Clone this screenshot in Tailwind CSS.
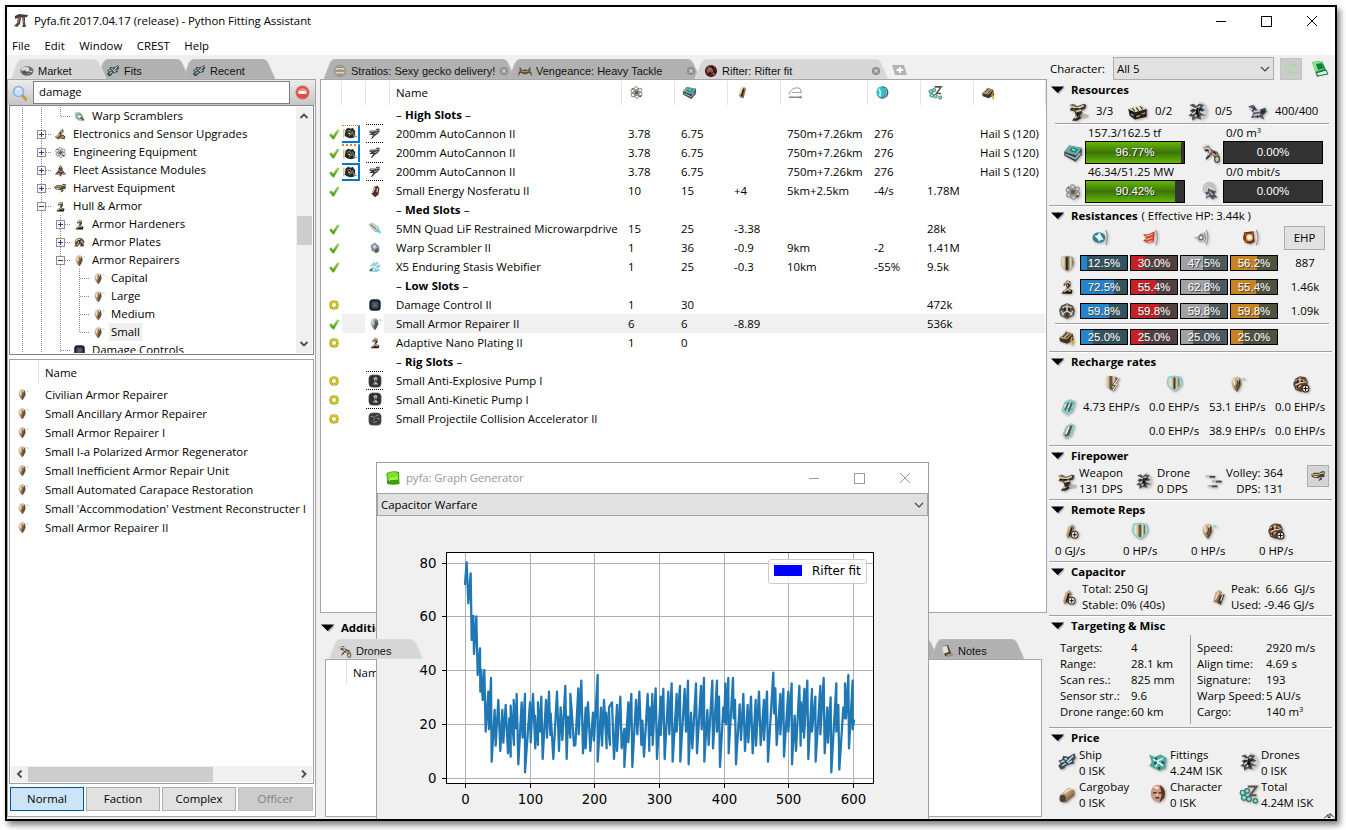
<!DOCTYPE html>
<html lang="en">
<head>
<meta charset="utf-8">
<title>Pyfa.fit 2017.04.17 (release) - Python Fitting Assistant</title>
<script src="https://cdn.jsdelivr.net/npm/@tailwindcss/browser@4"></script>
</head>
<body class="bg-white w-[1346px] h-[830px] overflow-hidden font-['Open_Sans','Noto_Sans',sans-serif] text-[11.4px] leading-4 text-black">
<svg class="absolute h-0 w-0">
  <defs>
    <linearGradient id="gTan" x1="0" y1="0" x2="1" y2="1"><stop offset="0" stop-color="#f4e6cd"/><stop offset=".5" stop-color="#b2916a"/><stop offset="1" stop-color="#3a2a1c"/></linearGradient>
    <linearGradient id="gDark" x1="0" y1="0" x2="1" y2="1"><stop offset="0" stop-color="#8d7d66"/><stop offset=".5" stop-color="#3f362b"/><stop offset="1" stop-color="#14100c"/></linearGradient>
    <linearGradient id="gTeal" x1="0" y1="0" x2="1" y2="1"><stop offset="0" stop-color="#b9f3ec"/><stop offset=".5" stop-color="#35a79c"/><stop offset="1" stop-color="#16403e"/></linearGradient>
    <linearGradient id="gGray" x1="0" y1="0" x2="1" y2="1"><stop offset="0" stop-color="#e4e4e2"/><stop offset=".5" stop-color="#8b8d8f"/><stop offset="1" stop-color="#2b2d30"/></linearGradient>
    <linearGradient id="gGreen" x1="0" y1="0" x2="0" y2="1"><stop offset="0" stop-color="#8bd24c"/><stop offset="1" stop-color="#3f8f12"/></linearGradient>
    <linearGradient id="gShield" x1="0" x2="1"><stop offset="0" stop-color="#f7f1e2"/><stop offset=".3" stop-color="#c9b48d"/><stop offset=".5" stop-color="#4a3723"/><stop offset=".75" stop-color="#e6dcc6"/><stop offset="1" stop-color="#4c3d2c"/></linearGradient>
  </defs>
  <symbol id="rep" viewBox="0 0 16 16"><path d="M4 3Q8 0 11 3L12 8Q10 13 8 15Q3 11 3 6Z" fill="url(#gTan)"/><path d="M8 4L9 7L7 11M10.500 4L10 9L8 13" stroke="#3a291a" fill="none" stroke-width=".9"/><path d="M5 4L6 9M8.500 3L9 5" stroke="#fff3dc"/><path d="M12 4Q15 2 15 5" stroke="#8fd3d0" fill="none"/></symbol>
  <symbol id="repg" viewBox="0 0 16 16"><path d="M4 3Q8 0 11 3L12 8Q10 13 8 15Q3 11 3 6Z" fill="url(#gGray)"/><path d="M8 4L9 7L7 11M10.500 4L10 9L8 13" stroke="#33464e" fill="none" stroke-width=".9"/><path d="M5 4L6 9" stroke="#eef8fa"/><path d="M12 4Q15 2 15 5" stroke="#6fc6c4" fill="none"/></symbol>
  <symbol id="plate" viewBox="0 0 16 16"><path d="M5 5L8 2L11 3V7L9 9L13 11L12 14H3L5 11L8 9L7 6L5 7Z" fill="url(#gDark)"/><path d="M6 5L9 3L10 5L8 7M5 12L9 10L11 12" stroke="#d6bb98" fill="none" stroke-width="1.3"/><path d="M9 5L10 7M7 13H12" stroke="#130e0a"/></symbol>
  <symbol id="plates" viewBox="0 0 16 16"><path d="M2 7Q3 3 8 2Q14 3 14 8L13 13H9V9L6 13H2L3 10Z" fill="#5c4a38"/><path d="M3 7Q6 3 9 4M5 11L7 7M10 6L13 10" stroke="#eadbbe" fill="none" stroke-width="1.4"/><path d="M8 5V9M4 9H6M11 8V12" stroke="#1c1510"/></symbol>
  <symbol id="gun" viewBox="0 0 16 16"><ellipse cx="11" cy="11.500" rx="5" ry="2" fill="#000" opacity=".2"/><path d="M1 3L4 2L7 4L12 2L14 3L13 6L10 7L11 9L9 11L10 13L7 15H3L6 11L5 8L1 7L3 5Z" fill="url(#gDark)"/><path d="M2 4L7 5.500L12 3.500M6 8L10 7M5 13L8 11" stroke="#dccaa8" stroke-width="1.300" fill="none"/><path d="M5 6H8M8 9L7 12M2 6H4" stroke="#120d08"/></symbol>
  <symbol id="gun2" viewBox="0 0 16 16"><path d="M1 6L3 4L8 4L10 2L14 2L12 4L14 4L11 8L8 10L5 13L3 14L6 9H1L4 7Z" fill="#3d3a37"/><path d="M3 5.500L12 3.500M7 8L11 6" stroke="#bcb3a6" stroke-width="1.100"/></symbol>
  <symbol id="ammo" viewBox="0 0 16 16"><path d="M3 4L6 2L9 3L11 2L14 6L13 13L9 14L5 13L2 11Z" fill="#272a22"/><path d="M5 6L8 5L10 9L7 11M11 6L12 11" stroke="#a39a80" fill="none"/><path d="M6 8L8 9" stroke="#e1d8b8" stroke-width="1.500"/><path d="M1 3V13" stroke="#a8b05b" stroke-width="1.200"/><path d="M12 12H16M13 10H15" stroke="#8b8678"/></symbol>
  <symbol id="launcher" viewBox="0 0 16 16"><path d="M1 6L10 4L15 6V12L6 14L2 11Z" fill="#211d17"/><path d="M1 6L9 3.500L15 6L6 8.500Z" fill="#e7ddc3"/><path d="M3 10L5 11M7 12L10 11M11 10L14 9" stroke="#9e8b63" stroke-width="1.200"/><path d="M4 5.500L6 8M7 5L9 7.500M10 4L12 6.500" stroke="#333" stroke-width=".9"/></symbol>
  <symbol id="drone" viewBox="0 0 16 16"><path d="M9 1A7 7 0 0 1 15 9Q14 13 11 14" stroke="#bbb" stroke-width=".8" fill="none"/><path d="M2 3L5 2L7 4L9 2L13 3L11 5L14 7L11 8L14 11L10 11L11 14L7 13L4 15L4 12L1 11L4 9L2 7L5 6Z" fill="#4b4d50"/><path d="M3 4L6 6L10 4M7 8L4 10M10 8L13 10M6 12L8 10" stroke="#dcdedf" fill="none"/><path d="M8 5L7 9L9 12M4 7H6M11 6L9 7" stroke="#131416"/></symbol>
  <symbol id="calib" viewBox="0 0 16 16"><path d="M1 4L5 3L8 7L14 5L15 8L12 11L13 14L9 12L3 13L5 9Z" fill="#52565f"/><path d="M2 5L6 8L13 7M5 11L10 10" stroke="#c4c9d2" fill="none" stroke-width="1.300"/><circle cx="12" cy="8" r="1.800" fill="#23293a"/><path d="M6 5L4 8M8 11V13" stroke="#252830"/></symbol>
  <symbol id="cpu" viewBox="0 0 16 16"><path d="M1 7L5 2L15 4V9L10 15L1 10Z" fill="#31494b"/><path d="M1 7L5 2L15 4L11 10Z" fill="#74a9a4"/><path d="M5 6L7 3.600L12 4.700L10 8Z" fill="#0f7b72"/><path d="M7 5L10 6" stroke="#6cf3dc" stroke-width="1.400"/><path d="M2 9L10 12.500L14 8" stroke="#b7c9c7" fill="none"/></symbol>
  <symbol id="pg" viewBox="0 0 16 16"><g fill="none" stroke="#8d8780" stroke-width="1"><ellipse cx="8" cy="8" rx="6.500" ry="2.600" transform="rotate(25 8 8)"/><ellipse cx="8" cy="8" rx="6.500" ry="2.600" transform="rotate(85 8 8)"/><ellipse cx="8" cy="8" rx="6.500" ry="2.600" transform="rotate(-35 8 8)"/></g><circle cx="8" cy="8" r="2" fill="#5f5852"/><circle cx="4" cy="4" r="1" fill="#6d655c"/><circle cx="12" cy="12" r="1.100" fill="#4d463f"/></symbol>
  <symbol id="cap" viewBox="0 0 16 16"><path d="M6 3L10 2L12 4L9 14L5 13L4 11Z" fill="url(#gTan)"/><path d="M9.500 4L7 12" stroke="#20160e" stroke-width="1.500"/><path d="M7 3L5 10" stroke="#fff0d5"/></symbol>
  <symbol id="capplus" viewBox="0 0 16 16"><path d="M5 3L9 1L11 4L8 13L4 14L3 11Z" fill="url(#gTan)"/><path d="M8.500 4L6 12" stroke="#20160e" stroke-width="1.500"/><circle cx="11" cy="11" r="3.200" fill="#eee" stroke="#3c2c1d"/><path d="M9 11H13M11 9V13" stroke="#111"/></symbol>
  <symbol id="nos" viewBox="0 0 16 16"><path d="M7 3L11 2L13 5L12 12L8 15L4 11Z" fill="#4b332b"/><path d="M8 4L5 10M11 5L10 10" stroke="#f3ddd0" stroke-width="1.300"/><path d="M10 9L9 13" stroke="#8c1f18" stroke-width="1.500"/></symbol>
  <symbol id="range" viewBox="0 0 16 16"><path d="M1 10Q3 3 10 3Q14 3 14 8" fill="none" stroke="#8f9394"/><path d="M4 8H15" stroke="#9fa3a3"/><path d="M1 13H15" stroke="#5e6262" stroke-width="1.200"/><path d="M13 11.500V14.500" stroke="#777"/></symbol>
  <symbol id="track" viewBox="0 0 16 16"><ellipse cx="8" cy="8" rx="6.300" ry="6.600" fill="#35656d"/><ellipse cx="6.600" cy="7.600" rx="4.800" ry="5.800" fill="#35c2cf"/><path d="M4 4Q7 8 5 12" stroke="#c5ffff" stroke-width="1.800" fill="none"/><path d="M11 3Q14 8 10 14" stroke="#c9c5ba" fill="none"/></symbol>
  <symbol id="isk" viewBox="0 0 16 16"><path d="M7 2H14L9 9H14" fill="none" stroke="#595443" stroke-width="1.700"/><g fill="#8fe0cf" stroke="#2b7468" stroke-width=".9"><circle cx="3" cy="7" r="2"/><circle cx="6.500" cy="5.500" r="1.800"/><circle cx="4" cy="11" r="2"/><circle cx="8" cy="12" r="1.900"/><circle cx="13" cy="13.400" r="1.700"/></g></symbol>
  <symbol id="crate" viewBox="0 0 16 16"><path d="M1 9L7 3L13 5L14 11L8 14L2 12Z" fill="#3f3527"/><path d="M1 9L7 3L13 5L8 10Z" fill="#b39f79"/><path d="M4 8L8 4M7 9L11 5" stroke="#4b3f2e"/><path d="M3 7L6 4" stroke="#f2e6c8"/><path d="M12.500 8L11.500 11.500H13.500L12.500 15.500" stroke="#d59d20" stroke-width="1.300" fill="none"/></symbol>
  <symbol id="mwd" viewBox="0 0 16 16"><path d="M1 3L5 1L12 6L13 11L8 11Z" fill="#ccd5d3" stroke="#8b918d" stroke-width=".6"/><path d="M3 3L9 8" stroke="#8a7556" stroke-width="1.200"/><path d="M9 8Q14 7 15 13L9 11Z" fill="#5ed6d4"/></symbol>
  <symbol id="scram" viewBox="0 0 16 16"><path d="M3 5L8 2L13 6V12L9 14L4 11Z" fill="#969eaa"/><path d="M7 10L12 8V12L9 14Z" fill="#6f5840"/><circle cx="7.500" cy="6.500" r="3" fill="#bcd0ea" stroke="#56698a"/></symbol>
  <symbol id="scramt" viewBox="0 0 16 16"><path d="M2 3L8 2L12 6L14 12L9 14L3 10Z" fill="#9fcfc4"/><circle cx="7.500" cy="8" r="3" fill="#ece1ca" stroke="#52645d"/><path d="M10 9L13 13" stroke="#5a4b32" stroke-width="2"/></symbol>
  <symbol id="web" viewBox="0 0 16 16"><path d="M2 6L6 4L5 1L8 4L12 1L11 5L15 6L12 9L14 12L9 14L3 13L2 10L5 9Z" fill="#8fcfd3"/><path d="M4 7L8 8L11 5M8 8L6 12M9 9L13 11" stroke="#e6fbfc" fill="none" stroke-width="1.200"/><path d="M2 12.500L5 10.500" stroke="#384d52" stroke-width="1.600"/></symbol>
  <symbol id="dc" viewBox="0 0 16 16"><rect x="1.500" y="1.500" width="13" height="13" rx="4" fill="#17222c"/><rect x="4" y="4" width="8" height="8" rx="2" fill="#34506c"/><rect x="6" y="6" width="4" height="4" fill="#7d5353"/></symbol>
  <symbol id="rig" viewBox="0 0 16 16"><rect x="1" y="1" width="14" height="14" rx="4" fill="#2f3032" stroke="#6a6a6a" stroke-width=".7"/><path d="M6 5L9 3L11 5L9 9L12 12H5L8 8Z" fill="#d8c4a7"/><path d="M9 5V8L6 12" stroke="#3d2d20" fill="none"/></symbol>
  <symbol id="rig2" viewBox="0 0 16 16"><rect x="1" y="1" width="14" height="14" rx="4" fill="#3a3a3b" stroke="#6a6a6a" stroke-width=".7"/><path d="M3 5L7 6L12 3M5 10L8 7L13 8M6 12L10 11" stroke="#a29a90" stroke-width="1.100" fill="none"/><path d="M8 5L10 9M4 8H6" stroke="#111"/></symbol>
  <symbol id="sensor" viewBox="0 0 16 16"><path d="M1 11L5 8L8 3L11 1L12 5L9 8L14 10L13 14L9 12L5 14Z" fill="#6f5744"/><path d="M9 3L10 6M3 11L7 8" stroke="#d9b893" stroke-width="1.500"/><circle cx="10.500" cy="11" r="2.200" fill="#c49a6c" stroke="#40301f"/></symbol>
  <symbol id="fleet" viewBox="0 0 16 16"><path d="M8 1L11 6L10 7L15 13H9V15H7V13H1L6 7L5 6Z" fill="#4d4340"/><path d="M8 2V5M6 9H10M4 12H7M10 12H13" stroke="#c99e93" stroke-width="1.200"/><circle cx="8" cy="7" r="1" fill="#a7342f"/></symbol>
  <symbol id="harvest" viewBox="0 0 16 16"><path d="M0 6L3 4L9 4L12 2L15 3L14 6L15 8L11 9L12 11L8 13L9 10L2 9Z" fill="#45433a"/><path d="M1 6L9 6" stroke="#dfa93b" stroke-width="1.500"/><path d="M9 5L14 4M8 11L10 9M3 8H7" stroke="#d5d3c8" stroke-width="1.100"/></symbol>
  <symbol id="market" viewBox="0 0 16 16"><ellipse cx="8" cy="8" rx="7.500" ry="5.500" fill="#6b6e6f"/><ellipse cx="6" cy="6" rx="4.400" ry="2.800" fill="#cfd8d6"/><circle cx="5" cy="9" r="1.800" fill="#7c3d32"/><path d="M9 11L14 8M8 5L11 9" stroke="#e3e5e5" stroke-width="1.200"/><path d="M7 12L10 9L13 11" stroke="#2b2d2e" fill="none"/></symbol>
  <symbol id="ship" viewBox="0 0 16 16"><path d="M1 7L4 6L5 3L9 4L14 1L15 5L13 7L14 9L10 10L7 11L6 13L3 14L1 11L3 9Z" fill="#3b4b54"/><path d="M3 8L6 7M8 8L13 3M4 11L7 9M9 9L12 7M6 5L8 6" stroke="#c9dce4" stroke-width="1.200" fill="none"/></symbol>
  <symbol id="fitt" viewBox="0 0 16 16"><path d="M1 2L5 4L10 2L15 5L14 13L9 15L5 13L1 11L3 8Z" fill="#4fa49c"/><path d="M4 6L8 7L12 5M6 12L8 8L12 11" stroke="#d3f7f1" stroke-width="1.300" fill="none"/><path d="M5 9H7M11 8L13 9M9 12V14M6 5L7 6" stroke="#164845" stroke-width="1.500"/></symbol>
  <symbol id="char" viewBox="0 0 16 16"><ellipse cx="8" cy="7.500" rx="5.800" ry="6.800" fill="#c99a82"/><path d="M9.500 1Q15 4 13 11L9 15L11 9Z" fill="#553224"/><path d="M4 7H7M8.500 7H11M6 11H9" stroke="#3a1f15"/><path d="M5 3Q7 2 8 4M7 8V9" stroke="#f9e4d8" stroke-width="1.600" fill="none"/></symbol>
  <symbol id="cargo" viewBox="0 0 16 16"><path d="M2 9L9 3L14 5V9L7 15L3 13Z" fill="url(#gTan)"/><ellipse cx="4.600" cy="11.600" rx="2.600" ry="3" fill="#54422f"/><path d="M6 7L11 4" stroke="#fff3dd"/></symbol>
  <symbol id="dbay" viewBox="0 0 16 16"><path d="M1 4L6 2L8 5L13 7L15 11L11 12L9 9L4 12L6 7Z" fill="#6b6762"/><path d="M2 4L6 4L8 8L13 10M5 10L8 7M1 2L5 1" stroke="#e6e1d7" fill="none"/><path d="M3 6L6 6M10 7L12 9M4 13L7 10" stroke="#22201e" fill="none"/><circle cx="8" cy="8.500" r="1.200" fill="#c52b23"/><ellipse cx="12.800" cy="13" rx="1.900" ry="2.500" fill="#cfc4a3" stroke="#564b34"/></symbol>
  <symbol id="bw" viewBox="0 0 16 16"><g fill="none" stroke="#b4b9bc"><circle cx="7" cy="5.500" r="5"/><circle cx="7" cy="5.500" r="2.800"/></g><path d="M6 5L9 7L13 8L11 10L14 13L11 13L10 15L7 12L4 14L5 10L3 9L6 8Z" fill="#474e57"/><path d="M7 8L10 11M5 12L7 10" stroke="#c5ccd4"/></symbol>
  <symbol id="em" viewBox="0 0 16 16"><ellipse cx="6.500" cy="8" rx="6" ry="5" fill="#357f93"/><path d="M2 6L5 6L7 3L9 7L11 10L8 10L7 12L5 9Z" fill="#e9fbff"/><path d="M13 1Q16 8 13 15" stroke="#8d8d8d" fill="none"/></symbol>
  <symbol id="th" viewBox="0 0 16 16"><path d="M1 5L6 5L12 2L11 12L5 13L1 11L4 9Z" fill="#d1402b"/><path d="M3 7L10 5M4 10L10 8M5 12L10 11" stroke="#ffb69b"/><path d="M13 1Q16 8 13 15" stroke="#8d8d8d" fill="none"/></symbol>
  <symbol id="ki" viewBox="0 0 16 16"><path d="M1 8L6 7L8 4L11 4L10 11L7 12L5 9Z" fill="#a9adac"/><circle cx="8.500" cy="8" r="2" fill="#f5f5f5" stroke="#666"/><path d="M11.500 3Q14 8 11.500 13M13.500 1Q16.500 8 13.500 15" stroke="#949494" fill="none"/></symbol>
  <symbol id="ex" viewBox="0 0 16 16"><path d="M2 3L11 2L12 12L8 14L3 13L1 9Z" fill="#71381a"/><circle cx="7" cy="8" r="3.200" fill="#ffc37b"/><circle cx="7" cy="8" r="1.800" fill="#fff8e6"/><path d="M3 4L4 6M11 4L9 5M3 12L5 11" stroke="#e67a22"/><path d="M13.500 1Q16.500 8 13.500 15" stroke="#8d8d8d" fill="none"/></symbol>
  <symbol id="shield" viewBox="0 0 16 16"><path d="M5 4Q9 0 13 4" stroke="#b7b7b7" fill="none"/><path d="M3 3Q8 1 13 3L14 8Q13 13 8 15Q3 13 3 8Z" fill="url(#gShield)" stroke="#a49c8d" stroke-width=".5"/><path d="M7.500 3V14" stroke="#28211a" stroke-width="1.200"/></symbol>
  <symbol id="shieldt" viewBox="0 0 16 16"><path d="M2 2Q8 0 14 2L15 8Q13 13 8 15Q3 13 1 8Z" fill="#9fdcd8" stroke="#72b9b5" stroke-width=".6"/><path d="M3.500 3Q8 1.500 12.500 3V10Q11 12.500 8 13.500Q5 12.500 3.500 10Z" fill="url(#gShield)"/></symbol>
  <symbol id="shieldb" viewBox="0 0 16 16"><path d="M1 2Q6 0 12 2V9Q10 13 7 14Q2 12 1 7Z" fill="url(#gShield)"/><path d="M14 3L9 9H12L8 15" fill="none" stroke="#4b3c2c" stroke-width="2"/><path d="M14 3L9.500 8.600H12.500L8 15" fill="none" stroke="#f4efe0"/></symbol>
  <symbol id="hull" viewBox="0 0 16 16"><path d="M8 1L13 3L15 7L14 12L8 15L2 12L1 7L3 3Z" fill="#5a534b"/><path d="M8 2V8L3 11M8 8L13 11M4 5Q8 3 12 5M3 8L5 12M13 8L11 12" stroke="#e9e2d4" stroke-width="1" fill="none"/><path d="M6 5V8M10 5V8M8 10V13" stroke="#1c1814"/></symbol>
  <symbol id="hullp" viewBox="0 0 16 16"><path d="M7 1L12 2L14 6L13 12L8 15L3 13L1 8L3 3Z" fill="#60432c"/><path d="M7 2V7L3 9M7 7L13 6M3 5Q7 3 11 5M4 12L8 9" stroke="#e2c9ab" stroke-width="1" fill="none"/><path d="M5 4V7M9 4V6M5 10V12" stroke="#22160d"/><circle cx="12" cy="12" r="3" fill="#eee" stroke="#32241a"/><path d="M10 12H14M12 10V14" stroke="#111"/></symbol>
  <symbol id="tank" viewBox="0 0 16 16"><path d="M2 11L5 3L10 1L15 3L12 12L7 15Z" fill="#8cc9c3"/><path d="M5.500 11L8.500 4M8.500 12L11.500 4" stroke="#3d5450" stroke-width="1.600"/><path d="M4 10L7 4M7 11L10 4" stroke="#f0efe4"/><path d="M6 5L13 5M4 9L12 10" stroke="#4d8e88" stroke-width=".8"/></symbol>
  <symbol id="tank1" viewBox="0 0 16 16"><path d="M3 11L6 4L11 1L14 3L11 12L6 15Z" fill="#8ccac5"/><path d="M5 11L8 4L12 3L9 12L6 13Z" fill="#5a4a38"/><path d="M6 11L9 4" stroke="#fbf2de" stroke-width="1.500"/></symbol>
  <symbol id="volley" viewBox="0 0 16 16"><g stroke-linecap="round" stroke-width="1.600"><path d="M1 4H9M7 8.500H15M3 13H11" stroke="#aeb4b4"/><path d="M5 4.500H9M11 9H15M7 13.500H11" stroke="#3f4545"/></g></symbol>
  <symbol id="cab" viewBox="0 0 16 16"><path d="M5 3L9 1L11 3L7 13L3 12Z" fill="url(#gTan)"/><path d="M9 6L14 5L10 15L7 13Z" fill="#47382b"/><path d="M8 3L5 10M12 6L10 11" stroke="#f5e6cf"/></symbol>
  <symbol id="note" viewBox="0 0 16 16"><path d="M2 3L9 1L13 11L6 14Z" fill="#3d3a36"/><path d="M2 3L8 2L10 9L4 11Z" fill="#e5dfd2"/><path d="M7 12L14 10L15 13L9 15Z" fill="#9b8f70"/></symbol>
  <symbol id="strat" viewBox="0 0 16 16"><circle cx="8" cy="8" r="6.500" fill="#b3aa98"/><path d="M3 6Q8 4 13 6M3 10H13" stroke="#e9e0cb" stroke-width="1.200" fill="none"/><path d="M3 8H13M5 12H11M5 4H11" stroke="#7d735f" stroke-width=".8"/><circle cx="8" cy="8" r="6.500" fill="none" stroke="#8f8674"/></symbol>
  <symbol id="veng" viewBox="0 0 16 16"><path d="M0 14L2 3L5 7L8 6L11 7L14 3L16 14L13 10L8 12L3 10Z" fill="#544b3b"/><path d="M4 8L8 9L12 8M2 6V9M14 6V9" stroke="#c0ae84" fill="none"/></symbol>
  <symbol id="rift" viewBox="0 0 16 16"><circle cx="8" cy="8" r="7" fill="#4d2522"/><path d="M3 6L8 4L12 7L9 10L4 11Z" fill="#a3584e"/><path d="M9 3L13 10M4 12L8 9" stroke="#26110f" stroke-width="1.500"/><path d="M5 4L7 6M10 11L12 12" stroke="#cfc6c4"/></symbol>
  <symbol id="ok" viewBox="0 0 16 16"><path d="M2.500 9L5 7.500L7 10L12 3L14 4L8 14H6.500Z" fill="url(#gGreen)" stroke="#a5d67c" stroke-width=".7"/></symbol>
  <symbol id="on" viewBox="0 0 16 16"><rect x="4.300" y="4.300" width="7.400" height="7.400" rx="3" fill="#fff" stroke="#8f8a10" stroke-width="3"/><rect x="4.300" y="4.300" width="7.400" height="7.400" rx="3" fill="none" stroke="#ddd51c" stroke-width="1.600"/></symbol>
  <symbol id="tri" viewBox="0 0 16 16"><path d="M2 5.500H16L9 13Z" fill="#000" opacity=".25"/><path d="M0 4H15L7.500 11.500Z"/></symbol>
  <symbol id="chev" viewBox="0 0 16 16"><path d="M4 6L8 10L12 6" fill="none" stroke="currentColor" stroke-width="1.200"/></symbol>
  <symbol id="chevb" viewBox="0 0 16 16"><path d="M4.500 6L8 9.500L11.500 6" fill="none" stroke="#505050" stroke-width="1.900"/></symbol>
  <symbol id="x" viewBox="0 0 16 16"><circle cx="8" cy="8" r="6.500" fill="#8e8e8e"/><path d="M5.300 5.300L10.700 10.700M10.700 5.300L5.300 10.700" stroke="#d8d8d8" stroke-width="1.800"/></symbol>
</svg>

<div id="window" class="relative ml-[5px] mt-[5px] flex h-[816px] w-[1332px] flex-col overflow-hidden border-2 border-black bg-white shadow-[3px_4px_6px_rgba(0,0,0,0.5)]"></div>
<script>
const ic = (id, s = 14) => `<svg class="shrink-0 ${s > 16 ? '[filter:drop-shadow(1px_1px_1px_rgba(0,0,0,.3))]' : ''}" width="${s}" height="${s}"><use href="#${id}"/></svg>`;

const tab = (w, ml, on, icon, label, close) => `
  <div class="relative flex h-5 shrink-0 items-center ${on ? 'z-10' : ''}" style="width:${w}px;margin-left:${ml}px">
    <svg class="absolute inset-0" width="${w}" height="20"><path d="M0 20L6 4Q8 0 12 0H${w - 13}Q${w - 9} 0 ${w - 7} 4L${w} 20Z" fill="${on ? '#d6d6d6' : '#b1b1b1'}" stroke="${on ? '#e4e4e4' : '#bcbcbc'}" stroke-width=".8"/></svg>
    <div class="relative flex w-full items-center gap-[4px] pl-[9px] pt-[3px] font-['Liberation_Sans',Arial,sans-serif] text-[11px] leading-4 text-[#111] ${close || 'pr-2'}">${ic(icon, 14)}<span class="grow whitespace-nowrap">${label}</span>${close ? ic('x', 10) : ''}</div>
  </div>`;

const caption = c => `<div class="flex items-center ${c}">
  <svg width="138" height="14" viewBox="0 0 138 14" fill="none" stroke="currentColor" shape-rendering="crispEdges"><path d="M12 7.500H22M57.500 2.500H67.500V12.500H57.500Z"/><path d="M103 2L113 12M113 2L103 12" shape-rendering="auto"/></svg></div>`;

/* market tree */
const cell = k => {
  const d = 'stroke="#8a8a8a" stroke-dasharray="1 1" shape-rendering="crispEdges"';
  let s = '';
  if (k === 'v' || k === 'p' || k === 'm' || k === 't') s += `<path d="M9.500 0V18" ${d}/>`;
  if (k === 'l') s += `<path d="M9.500 0V10" ${d}/>`;
  if (k !== 'v') s += `<path d="M10 9.500H20" ${d}/>`;
  if (k === 'p' || k === 'm') s += `<rect x="5.500" y="5.500" width="8" height="8" fill="#f7f7f7" stroke="#8f8f8f"/><path d="M7 9.500H12${k === 'p' ? 'M9.500 7V12' : ''}" stroke="#2c3f8c"/>`;
  return `<svg class="shrink-0" width="19" height="18" fill="none">${s}</svg>`;
};
const tree = [
  ['vvl', 'scramt', 'Warp Scramblers'], ['vp', 'sensor', 'Electronics and Sensor Upgrades'], ['vp', 'pg', 'Engineering Equipment'],
  ['vp', 'fleet', 'Fleet Assistance Modules'], ['vp', 'harvest', 'Harvest Equipment'], ['vm', 'plate', 'Hull &amp; Armor'],
  ['vvp', 'plate', 'Armor Hardeners'], ['vvp', 'plates', 'Armor Plates'], ['vvm', 'rep', 'Armor Repairers'],
  ['vvvt', 'rep', 'Capital'], ['vvvt', 'rep', 'Large'], ['vvvt', 'rep', 'Medium'], ['vvvl', 'rep', 'Small', 1], ['vvt', 'dc', 'Damage Controls']
].map(([c, i, t, s]) => `<div class="flex h-[18px] shrink-0 items-center whitespace-nowrap">${[...c].map(cell).join('')}<span class="flex w-[19px] shrink-0 justify-center">${ic(i, 13)}</span><span class="${s ? 'ml-px bg-[#efefef] px-[2px] leading-[18px]' : 'ml-[3px]'}">${t}</span></div>`).join('');

const items = ['Civilian Armor Repairer', 'Small Ancillary Armor Repairer', 'Small Armor Repairer I', 'Small I-a Polarized Armor Regenerator', 'Small Inefficient Armor Repair Unit', 'Small Automated Carapace Restoration', "Small 'Accommodation' Vestment Reconstructer I", 'Small Armor Repairer II']
  .map(t => `<div class="flex h-[19px] items-center whitespace-nowrap"><span class="flex w-[35px] shrink-0 pl-[6px]">${ic('rep', 13)}</span>${t}</div>`).join('');

const left = `
<div class="flex w-[309px] shrink-0 flex-col">
  <div class="flex h-6 items-end pl-[4px]">${tab(95, 0, 1, 'market', 'Market')}${tab(92, -9, 0, 'ship', 'Fits')}${tab(92, -6, 0, 'ship', 'Recent')}</div>
  <div class="flex h-[738px] flex-col border border-[#a5a5a5] bg-[#fdfdfd]">
    <div class="flex h-[25px] items-center bg-linear-to-b from-[#ececec] to-[#c6c6c6]">
      <svg width="25" height="18" viewBox="0 0 25 18"><path d="M14 11L18 15.500" stroke="#c79a4b" stroke-width="3" stroke-linecap="round"/><circle cx="10.500" cy="7.500" r="5" fill="#c5e1fb" stroke="#8ab0dd" stroke-width="1.500"/><path d="M8 6Q9 4 12 5" stroke="#fff" fill="none"/></svg>
      <div class="flex h-[23px] w-[257px] items-center border border-[#7f7f7f] bg-white pb-[2px] pl-[5px]">damage</div>
      <svg class="ml-[5px]" width="15" height="15" viewBox="0 0 15 15"><circle cx="7.500" cy="7.500" r="7" fill="#d9665c"/><circle cx="7.500" cy="7.500" r="5.600" fill="#dd4c3f"/><path d="M2.500 6Q7.500 0 12.500 6Z" fill="#ee8f84"/><rect x="3.500" y="6" width="8" height="3" fill="#fff"/></svg>
    </div>
    <div class="ml-px flex h-[250px] w-[305px] border border-[#82828f] bg-white p-px">
      <div class="flex grow flex-col overflow-hidden pl-[2px]">${tree}</div>
      <div class="flex w-4 shrink-0 flex-col items-center justify-between bg-[#f0f0f0] py-px"><svg class="rotate-180" width="16" height="16"><use href="#chevb"/></svg><div class="mt-[92px] h-[29px] w-[15px] shrink-0 bg-[#cdcdcd]"></div><div class="grow"></div>${ic('chevb', 16)}</div>
    </div>
    <div class="ml-px mt-1 flex h-[425px] w-[305px] flex-col border border-[#a0a0a8] bg-white">
      <div class="flex h-[25px] shrink-0"><div class="h-6 w-[29px] border-r border-[#e2e2e2]"></div><span class="pl-[6px] pt-[5px]">Name</span></div>
      <div class="grow overflow-hidden">${items}</div>
      <div class="mx-px mb-px flex h-4 items-center bg-[#f0f0f0]"><svg class="rotate-90" width="17" height="16" viewBox="0 0 16 16"><use href="#chevb"/></svg><div class="h-[15px] w-[185px] bg-[#cdcdcd]"></div><div class="grow"></div><svg class="-rotate-90" width="16" height="16"><use href="#chevb"/></svg></div>
    </div>
    <div class="ml-[2px] mt-[3px] flex gap-[2px]">
      <div class="flex h-6 w-[74px] items-center justify-center border border-[#005499] bg-[#cce4f7]">Normal</div>
      <div class="flex h-6 w-[74px] items-center justify-center border border-[#adadad] bg-[#e1e1e1]">Faction</div>
      <div class="flex h-6 w-[74px] items-center justify-center border border-[#adadad] bg-[#e1e1e1]">Complex</div>
      <div class="flex h-6 w-[75px] items-center justify-center border border-[#bfbfbf] bg-[#cccccc] text-[#838383]">Officer</div>
    </div>
  </div>
</div>`;

/* fitting list */
const cols = 'grid grid-cols-[20px_24px_24px_232px_53px_53px_53px_87px_53px_53px_72px] whitespace-nowrap items-center';
const head = `<div class="${cols} ml-px h-[25px]">${['', '', '', 'Name', 'pg', 'cpu', 'cap', 'range', 'track', 'isk', 'crate'].map((h, i) => `<div class="flex h-6 items-center border-r border-[#e2e2e2] ${i === 3 ? 'pl-[6px]' : 'pl-[7px]'}">${i === 3 ? h : h ? ic(h, 15) : ''}</div>`).join('')}</div>`;
const ammoCell = n => n === undefined ? '' : `<div class="flex h-[18px] w-[18px] items-center justify-center border-r-2 border-[#0078d7] ${n === 2 ? 'border-y-2' : n === 1 ? 'border-t-2 border-t-[#e08030] [border-top-style:dotted]' : 'border-b-2 border-t border-t-[#e08030] [border-top-style:dotted]'}">${ic('ammo', 14)}</div>`;
const rows = [
  '– <b>High Slots</b> –',
  ['ok', 0, 'gun2', 1, '200mm AutoCannon II', '3.78', '6.75', '', '750m+7.26km', '276', '', 'Hail S (120)'],
  ['ok', 1, 'gun2', 0, '200mm AutoCannon II', '3.78', '6.75', '', '750m+7.26km', '276', '', 'Hail S (120)'],
  ['ok', 2, 'gun2', 1, '200mm AutoCannon II', '3.78', '6.75', '', '750m+7.26km', '276', '', 'Hail S (120)'],
  ['ok', , 'nos', 0, 'Small Energy Nosferatu II', '10', '15', '+4', '5km+2.5km', '-4/s', '1.78M', ''],
  '– <b>Med Slots</b> –',
  ['ok', , 'mwd', 0, '5MN Quad LiF Restrained Microwarpdrive', '15', '25', '-3.38', '', '', '28k', ''],
  ['ok', , 'scram', 0, 'Warp Scrambler II', '1', '36', '-0.9', '9km', '-2', '1.41M', ''],
  ['ok', , 'web', 0, 'X5 Enduring Stasis Webifier', '1', '25', '-0.3', '10km', '-55%', '9.5k', ''],
  '– <b>Low Slots</b> –',
  ['on', , 'dc', 0, 'Damage Control II', '1', '30', '', '', '', '472k', ''],
  ['ok', , 'repg', 0, 'Small Armor Repairer II', '6', '6', '-8.89', '', '', '536k', '', 'sel'],
  ['on', , 'plate', 0, 'Adaptive Nano Plating II', '1', '0', '', '', '', '', ''],
  '– <b>Rig Slots</b> –',
  ['on', , 'rig', 1, 'Small Anti-Explosive Pump I', '', '', '', '', '', '', ''],
  ['on', , 'rig', 2, 'Small Anti-Kinetic Pump I', '', '', '', '', '', '', ''],
  ['on', , 'rig2', 0, 'Small Projectile Collision Accelerator II', '', '', '', '', '', '', '']
].map(r => {
  if (typeof r === 'string') return `<div class="flex h-[19px] items-center pl-[75px]"><span class="[word-spacing:0.4px]">${r}</span></div>`;
  const [st, am, icon, dot, name, ...v] = r, sel = v[7];
  const dots = dot === 1 ? 'border-y border-dotted border-black' : dot === 2 ? 'border-b border-dotted border-black' : '';
  return `<div class="${cols} h-[19px]"><span class="pl-[6px]">${ic(st, 14)}</span><span class="ml-px flex h-[19px] items-center ${sel ? 'bg-[#f0f0f0]' : ''}">${ammoCell(am)}</span><span class="ml-px flex h-[19px] w-[17px] items-center justify-center ${dots}">${ic(icon, 14)}</span>
    <span class="-ml-[5px] h-[19px] pl-[12px] leading-[19px] ${sel ? 'bg-[#f0f0f0]' : ''}">${name}</span>${v.slice(0, 7).map(t => `<span class="h-[19px] pl-[7px] leading-[19px] ${sel ? 'bg-[#f0f0f0]' : ''}">${t}</span>`).join('')}</div>`;
}).join('');

const hdr = (t, extra = '') => `<div class="flex h-[19px] items-center pt-px"><span class="ml-[4px] mr-[6px] flex">${ic('tri', 14)}</span><b>${t}</b>${extra}</div>`;

const centre = `
<div class="ml-1 flex w-[727px] shrink-0 flex-col">
  <div class="flex h-6 items-end pl-[4px]">${tab(191, 0, 0, 'strat', 'Stratios: Sexy gecko delivery!', 'pr-2')}${tab(191, -6, 0, 'veng', 'Vengeance: Heavy Tackle', 'pr-1')}${tab(193, -5, 1, 'rift', 'Rifter: Rifter fit', 'pr-[7px]')}
    <svg class="mb-1 ml-1" width="15" height="10" viewBox="0 0 15 10"><path d="M0 0H12L15 10H3Z" fill="#b4b4b4"/><path d="M4.500 5H11M7.800 2V8" stroke="#fff" stroke-width="2"/></svg></div>
  <div class="h-[534px] border border-[#a5a5ab] bg-white">${head}${rows}</div>
  <div class="-ml-[3px] h-[26px] w-[60px] overflow-hidden whitespace-nowrap pt-[5px]">${hdr('Additions')}</div>
  <div class="flex h-5 items-end pl-[9px]">${tab(94, 0, 1, 'dbay', 'Drones')}<div class="w-[495px]"></div>${tab(40, -20, 0, 'note', '')}${tab(93, -7, 0, 'note', 'Notes')}</div>
  <div class="ml-[5px] h-[158px] w-[717px] border border-[#a5a5ab] bg-white"><div class="flex h-[26px]"><div class="h-6 w-[21px] border-r border-[#e2e2e2]"></div><span class="pl-[6px] pt-[5px]">Name</span></div></div>
</div>`;

/* statistics */
const gauge = (p, t) => `<div class="flex h-[23px] w-[100px] border border-black bg-[#333]"><div class="h-full shrink-0 bg-linear-to-b from-[#66b80a] via-[#3c7407] to-[#66b80a]" style="width:${p}%"></div><span class="w-[98px] shrink-0 text-center font-['Liberation_Sans',Arial,sans-serif] text-[11.500px] leading-[21px] text-white [text-shadow:1px_1px_0_#333]" style="margin-left:${-p * .98}px">${t}</span></div>`;
const pal = [['bg-[#2483c9]', 'bg-[#33545f]'], ['bg-[#c62026]', 'bg-[#543e40]'], ['bg-[#a0a1a4]', 'bg-[#4c5a5e]'], ['bg-[#c78321]', 'bg-[#4f523c]']];
const res = (i, a, ehp) => `<div class="flex h-6 items-center"><span class="flex w-[33px] justify-center pl-[7px]">${ic(i, 18)}</span><div class="flex gap-[2px]">${a.map((v, k) => `<div class="flex h-4 w-12 border border-black ${pal[k][1]}"><div class="h-full shrink-0 ${pal[k][0]}" style="width:${v}%"></div><span class="w-[46px] shrink-0 text-center font-['Liberation_Sans',Arial,sans-serif] text-[11.500px] leading-[15px] text-white [text-shadow:1px_1px_0_#444]" style="margin-left:${-v * .46}px">${v.toFixed(1)}%</span></div>`).join('')}</div><span class="w-[54px] text-center">${ehp}</span></div>`;
const line = `<div class="ml-[2px] h-px w-[283px] bg-[#a0a0a0] shadow-[0_1px_0_#fff]"></div>`, line2 = `<div class="ml-2 h-px w-[274px] bg-[#a0a0a0] shadow-[0_1px_0_#fff]"></div>`;
const two = (a, b, c = '') => `<div class="whitespace-pre ${c}">${a}<br>${b}</div>`;

const right = `
<div class="flex w-[288px] shrink-0 flex-col whitespace-nowrap">
  <div class="flex h-[25px] items-center pt-[2px]"><span class="ml-[3px] w-[63px]">Character:</span><div class="flex h-[23px] w-[161px] items-center justify-between border border-[#adadad] bg-[#e1e1e1] pl-[3px] text-black">All 5<span class="text-[#444]">${ic('chev', 16)}</span></div>
    <div class="ml-[6px] flex h-[22px] w-[22px] items-center justify-center border border-[#c3c3c3] bg-[#cccccc]"><svg width="15" height="14" viewBox="0 0 15 14" fill="none" stroke="#b1d6aa" stroke-width="1.800"><path d="M1 6Q1 3 5 3H11M9 0L12 3L9 6M14 8Q14 11 10 11H4M6 8L3 11L6 14"/></svg></div>
    <svg class="ml-[9px]" width="18" height="18" viewBox="0 0 18 18"><path d="M1 2L11 1L16 12L6 17Z" fill="#1b8a4b"/><path d="M1 2L11 1L13 9L4 12Z" fill="#8be08a"/><path d="M5 4L11 3L13 8L7 10Z" fill="#0c7f3a"/><path d="M5 13L15 10L17 14L7 16Z" fill="#d7f1dc" stroke="#15713c"/></svg></div>
  ${hdr('Resources')}
  <div class="flex h-6 items-center"><span class="ml-[21px] flex">${ic('gun', 21)}</span><span class="ml-[7px] w-[31px]">3/3</span>${ic('launcher', 21)}<span class="ml-[7px] w-[32px]">0/2</span>${ic('drone', 21)}<span class="ml-[7px] w-[32px]">0/5</span>${ic('calib', 21)}<span class="ml-[7px]">400/400</span></div>
  ${line2}
  <div class="grid grid-cols-[38px_100px_38px_100px]">
    <span></span><span class="h-[17px] pl-[3px] pt-px">157.3/162.5 tf</span><span></span><span class="pl-[3px] pt-px">0/0 m<sup class="text-[7.500px]">3</sup></span>
    <span class="flex items-center pl-[16px]">${ic('cpu', 20)}</span>${gauge(96.77, '96.77%')}<span class="flex items-center pl-[16px]">${ic('dbay', 20)}</span>${gauge(0, '0.00%')}
    <span></span><span class="h-4 pl-[3px]">46.34/51.25 MW</span><span></span><span class="pl-[3px]">0/0 mbit/s</span>
    <span class="flex items-center pl-[17px]">${ic('pg', 18)}</span>${gauge(90.42, '90.42%')}<span class="flex items-center pl-[16px]">${ic('bw', 19)}</span>${gauge(0, '0.00%')}
  </div>
  <div class="h-[2px]"></div>${line}
  ${hdr('Resistances', '<span class="ml-[4px] tracking-[-0.04px]">( Effective HP: 3.44k )</span>')}
  <div class="flex h-[26px] items-start pt-px"><div class="ml-[45px] flex gap-[33px] pt-[3px]">${['em', 'th', 'ki', 'ex'].map(i => ic(i, 17)).join('')}</div><div class="ml-[25px] flex h-6 w-[41px] items-center justify-center border border-[#adadad] bg-[#e1e1e1]">EHP</div></div>
  ${res('shield', [12.5, 30, 47.5, 56.2], '887')}${res('plate', [72.5, 55.4, 62.8, 55.4], '1.46k')}${res('hull', [59.8, 59.8, 59.8, 59.8], '1.09k')}
  ${line2}<div class="h-[27px] pt-px">${res('crate', [25, 25, 25, 25], '')}</div>${line}
  ${hdr('Recharge rates')}
  <div class="flex h-6 items-center pt-px"><span class="ml-[57px] flex w-[62px]">${ic('shieldb', 17)}</span><span class="flex w-[62px]">${ic('shieldt', 17)}</span><span class="flex w-[64px]">${ic('rep', 18)}</span>${ic('hullp', 18)}</div>
  <div class="grid h-6 grid-cols-[36px_63px_63px_66px_60px] items-center"><span class="pl-[12px]">${ic('tank', 18)}</span><span>4.73 EHP/s</span><span class="pl-[3px]">0.0 EHP/s</span><span>53.1 EHP/s</span><span>0.0 EHP/s</span></div>
  <div class="grid h-[26px] grid-cols-[36px_63px_63px_66px_60px] items-center pb-[2px]"><span class="pl-[12px]">${ic('tank1', 18)}</span><span></span><span class="pl-[3px]">0.0 EHP/s</span><span>38.9 EHP/s</span><span>0.0 EHP/s</span></div>
  ${line}${hdr('Firepower')}
  <div class="flex h-[34px]"><span class="ml-[10px] mt-[7px] w-[22px]">${ic('gun', 20)}</span>${two('Weapon', '131 DPS', 'w-[56px]')}<span class="mt-[7px] w-[22px]">${ic('drone', 18)}</span>${two('Drone', '0 DPS', 'w-[48px]')}<span class="mt-[7px] w-[18px]">${ic('volley', 17)}</span>${two('Volley: 364', 'DPS: 131', 'ml-[3px] w-[57px] text-right')}<div class="ml-[24px] flex h-[22px] w-[22px] items-center justify-center border border-[#adadad] bg-[#d5d5d5]">${ic('harvest', 15)}</div></div>
  ${line}${hdr('Remote Reps')}
  <div class="grid h-[42px] grid-cols-4 pl-[8px] pr-[8px]">${[['capplus', '0 GJ/s', 17], ['shieldt', '0 HP/s', 18], ['rep', '0 HP/s', 18], ['hullp', '0 HP/s', 18]].map(([i, t, s]) => `<div class="flex flex-col"><span class="flex h-6 items-center pl-[8px]">${ic(i, s)}</span><span>${t}</span></div>`).join('')}</div>
  ${line}${hdr('Capacitor')}
  <div class="flex h-[34px]"><span class="ml-[13px] mt-2 w-[22px]">${ic('capplus', 17)}</span>${two('Total: 250 GJ', 'Stable: 0% (40s)', 'w-[128px]')}<span class="mt-2 w-[21px]">${ic('cab', 17)}</span>${two('Peak:  6.66  GJ/s', 'Used: -9.46 GJ/s')}</div>
  ${line}${hdr('Targeting &amp; Misc')}
  <div class="flex h-[92px]">
    <div class="ml-[13px] grid w-[130px] grid-cols-[71px_1fr] content-start pt-[5px]">${[['Targets:', '4'], ['Range:', '28.1 km'], ['Scan res.:', '825 mm'], ['Sensor str.:', '9.6'], ['Drone range:', '60 km']].map(([a, b]) => `<span>${a}</span><span>${b}</span>`).join('')}</div>
    <div class="h-[89px] w-px bg-[#a0a0a0]"></div>
    <div class="ml-[6px] grid grid-cols-[69px_1fr] content-start pt-[5px]">${[['Speed:', '2920 m/s'], ['Align time:', '4.69 s'], ['Signature:', '193'], ['Warp Speed:', '5 AU/s'], ['Cargo:', '140 m<sup class="text-[7.500px]">3</sup>']].map(([a, b]) => `<span class="h-4">${a}</span><span class="h-4">${b}</span>`).join('')}</div>
  </div>
  ${line}${hdr('Price')}
  <div class="grid grid-cols-[91px_91px_91px] pl-[10px]">${[['ship', 'Ship', '0 ISK'], ['fitt', 'Fittings', '4.24M ISK'], ['drone', 'Drones', '0 ISK'], ['cargo', 'Cargobay', '0 ISK'], ['char', 'Character', '0 ISK'], ['isk', 'Total', '4.24M ISK']].map(([i, a, b]) => `<div class="flex h-8"><span class="w-[22px] pt-[5px]">${ic(i, 20)}</span>${two(a, b)}</div>`).join('')}</div>
  <svg class="ml-[277px] mt-auto" width="11" height="6" viewBox="0 0 11 6" fill="#fff" stroke="#222"><path d="M0 5.500L4 1.500V4.500H6V.500L10 4.500"/></svg>
</div>`;

/* capacitor graph, stored at three units per pixel */
const trace = 'M465,387 470,322 475,445 482,355 485,555 490,483 492,597 499,484 503,660 510,580 511,710 514,645 518,735 523,645 527,830 535,710 537,823 543,669 545,920 554,765 557,872 565,735 571,888 577,765 580,863 587,750 594,895 598,790 602,905 602,752 612,870 611,735 618,820 620,717 625,928 635,742 638,848 645,717 645,952 660,742 662,862 669,717 676,880 675,782 684,870 684,742 690,830 694,725 698,912 708,735 711,848 717,710 721,840 722,775 730,912 741,710 747,888 752,757 757,855 766,693 770,912 774,785 781,848 781,717 785,765 792,872 796,870 805,700 806,838 814,677 819,895 827,758 827,880 834,742 841,888 849,773 852,857 863,660 863,920 873,758 876,872 882,735 890,880 889,773 900,870 897,757 906,742 912,912 921,750 921,888 931,725 935,880 943,822 943,936 955,742 955,862 '
+ [[4,717,7,936],[18,735,22,838],[28,710,34,870],[37,797,42,905],[53,717,58,888],[58,757,62,840],[67,717,68,870],[77,700,81,912],[92,725,92,840],[100,702,104,912],[115,710,118,838],[125,685,128,920],[140,717,140,830],[150,693,151,920],[164,702,168,830],[174,677,176,928],[183,773,187,880],[198,685,201,895],[213,693,215,823],[222,669,223,920],[232,765,236,870],[247,677,249,880],[261,677,261,830],[267,725,270,936],[280,757,283,800],[286,685,288,808],[295,669,296,895],[309,669,311,790],[315,735,318,928],[329,748,333,855],[340,717,345,888],[353,750,355,862],[363,725,368,895],[377,735,378,872],[387,710,392,870],[402,735,402,855],[411,710,414,920],[430,653,432,775],[436,700,440,870],[451,717,451,838],[460,702,462,905],[475,710,475,830],[485,685,486,928],[494,782,498,888],[508,693,512,872],[513,742,516,830],[523,702,522,848],[532,677,535,912],[546,702,546,830],[556,725,557,920],[571,693,571,838],[581,669,584,895],[592,757,594,863],[602,727,604,952],[619,685,619,830],[625,750,628,944],[640,757,645,790],[645,685,648,790],[655,660,657,880],[668,677,668,823]].map(a => `${a[0]+960},${a[1]} ${a[2]+960},${a[3]}`).join(' ') + ' 1632,797';
const xs = [0, 1, 2, 3, 4, 5, 6].map(i => [i * 100, 89 + [0, 65, 129, 194, 259, 323, 388][i]]);
const ys = [[80, 101], [60, 154], [40, 208], [20, 262], [0, 316]];
const graph = `
<div class="absolute left-[369px] top-[455px] flex h-[358px] w-[553px] flex-col border border-[#a0a0a0] bg-[#f0f0f0]">
  <div class="flex h-[30px] shrink-0 items-center bg-white pl-[9px] text-[#999]"><svg width="14" height="14" viewBox="0 0 14 14"><path d="M.5 2Q7 -1 13 1L13.500 13Q7 14.500 1 13Z" fill="#3e9b12"/><path d="M1.500 2.500Q7 0 12 2L12.500 9H1.500Z" fill="#7fe02a"/><path d="M3 10L6 7L8 8.500L11 6" stroke="#d5ffb8" fill="none"/></svg><span class="ml-[6px] grow tracking-[-0.1px]">pyfa: Graph Generator</span>${caption('mr-[-7px] text-[#999]')}</div>
  <div class="flex h-[23px] shrink-0 items-center justify-between border border-[#a5a5a5] bg-[#e1e1e1] pl-[3px]">Capacitor Warfare<span class="text-[#444]">${ic('chev', 16)}</span></div>
  <svg width="551" height="302" viewBox="1 54 551 302" class="shrink-0 font-['DejaVu_Sans',sans-serif] text-[13.300px]">
    <rect x="70" y="90" width="427" height="231" fill="#fff"/>
    <g stroke="#b0b0b0" shape-rendering="crispEdges">${xs.map(x => `<path d="M${x[1]+.5} 90V321"/>`).join('')}${ys.map(y => `<path d="M70 ${y[1]+.5}H497"/>`).join('')}</g>
    <path transform="translate(-66 -7) scale(.33333)" d="${trace}" fill="none" stroke="#1f77b4" stroke-width="6.800" stroke-linejoin="round" stroke-linecap="round"/>
    <rect x="70.500" y="90.500" width="427" height="231" fill="none" stroke="#000" shape-rendering="crispEdges"/>
    <g stroke="#000" shape-rendering="crispEdges">${xs.map(x => `<path d="M${x[1]+.5} 322V326"/>`).join('')}${ys.map(y => `<path d="M66 ${y[1]+.5}H70"/>`).join('')}</g>
    <g text-anchor="middle">${xs.map(x => `<text x="${x[1]+.5}" y="342">${x[0]}</text>`).join('')}</g>
    <g text-anchor="end">${ys.map(y => `<text x="60.500" y="${y[1]+5}">${y[0]}</text>`).join('')}</g>
    <rect x="392.500" y="97.500" width="98" height="24" rx="2.500" fill="#fff" fill-opacity=".8" stroke="#ccc"/>
    <rect x="398" y="103" width="28" height="11" fill="#00f"/><text x="436" y="113" class="text-[12px]">Rifter fit</text>
  </svg>
</div>`;

document.getElementById('window').innerHTML = `
<div class="flex h-[28px] shrink-0 items-center pl-[7px]">
  <svg width="15" height="14" viewBox="0 0 15 14"><path d="M1 2L5 0L14 1L13 3L4 4L1 5Z" fill="#4a3934"/><path d="M4 3L3 9L0 12L3 13L6 10L7 4ZM8 3L9 11L8 13H12L11 8L11 3Z" fill="#5a4640"/><path d="M5 3L4 9M9 3L10 9" stroke="#a18f88" stroke-width=".8"/></svg>
  <span class="ml-[5px] grow tracking-[-0.04px]">Pyfa.fit 2017.04.17 (release) - Python Fitting Assistant</span>${caption('mr-[-7px] text-black')}
</div>
<div class="flex h-5 shrink-0 items-start gap-[14.500px] pl-[5px] pt-[3px]"><span>File</span><span>Edit</span><span>Window</span><span>CREST</span><span>Help</span></div>
<div class="flex grow bg-[#f0f0f0]">${left}${centre}${right}</div>${graph}`;
</script>
</body>
</html>
